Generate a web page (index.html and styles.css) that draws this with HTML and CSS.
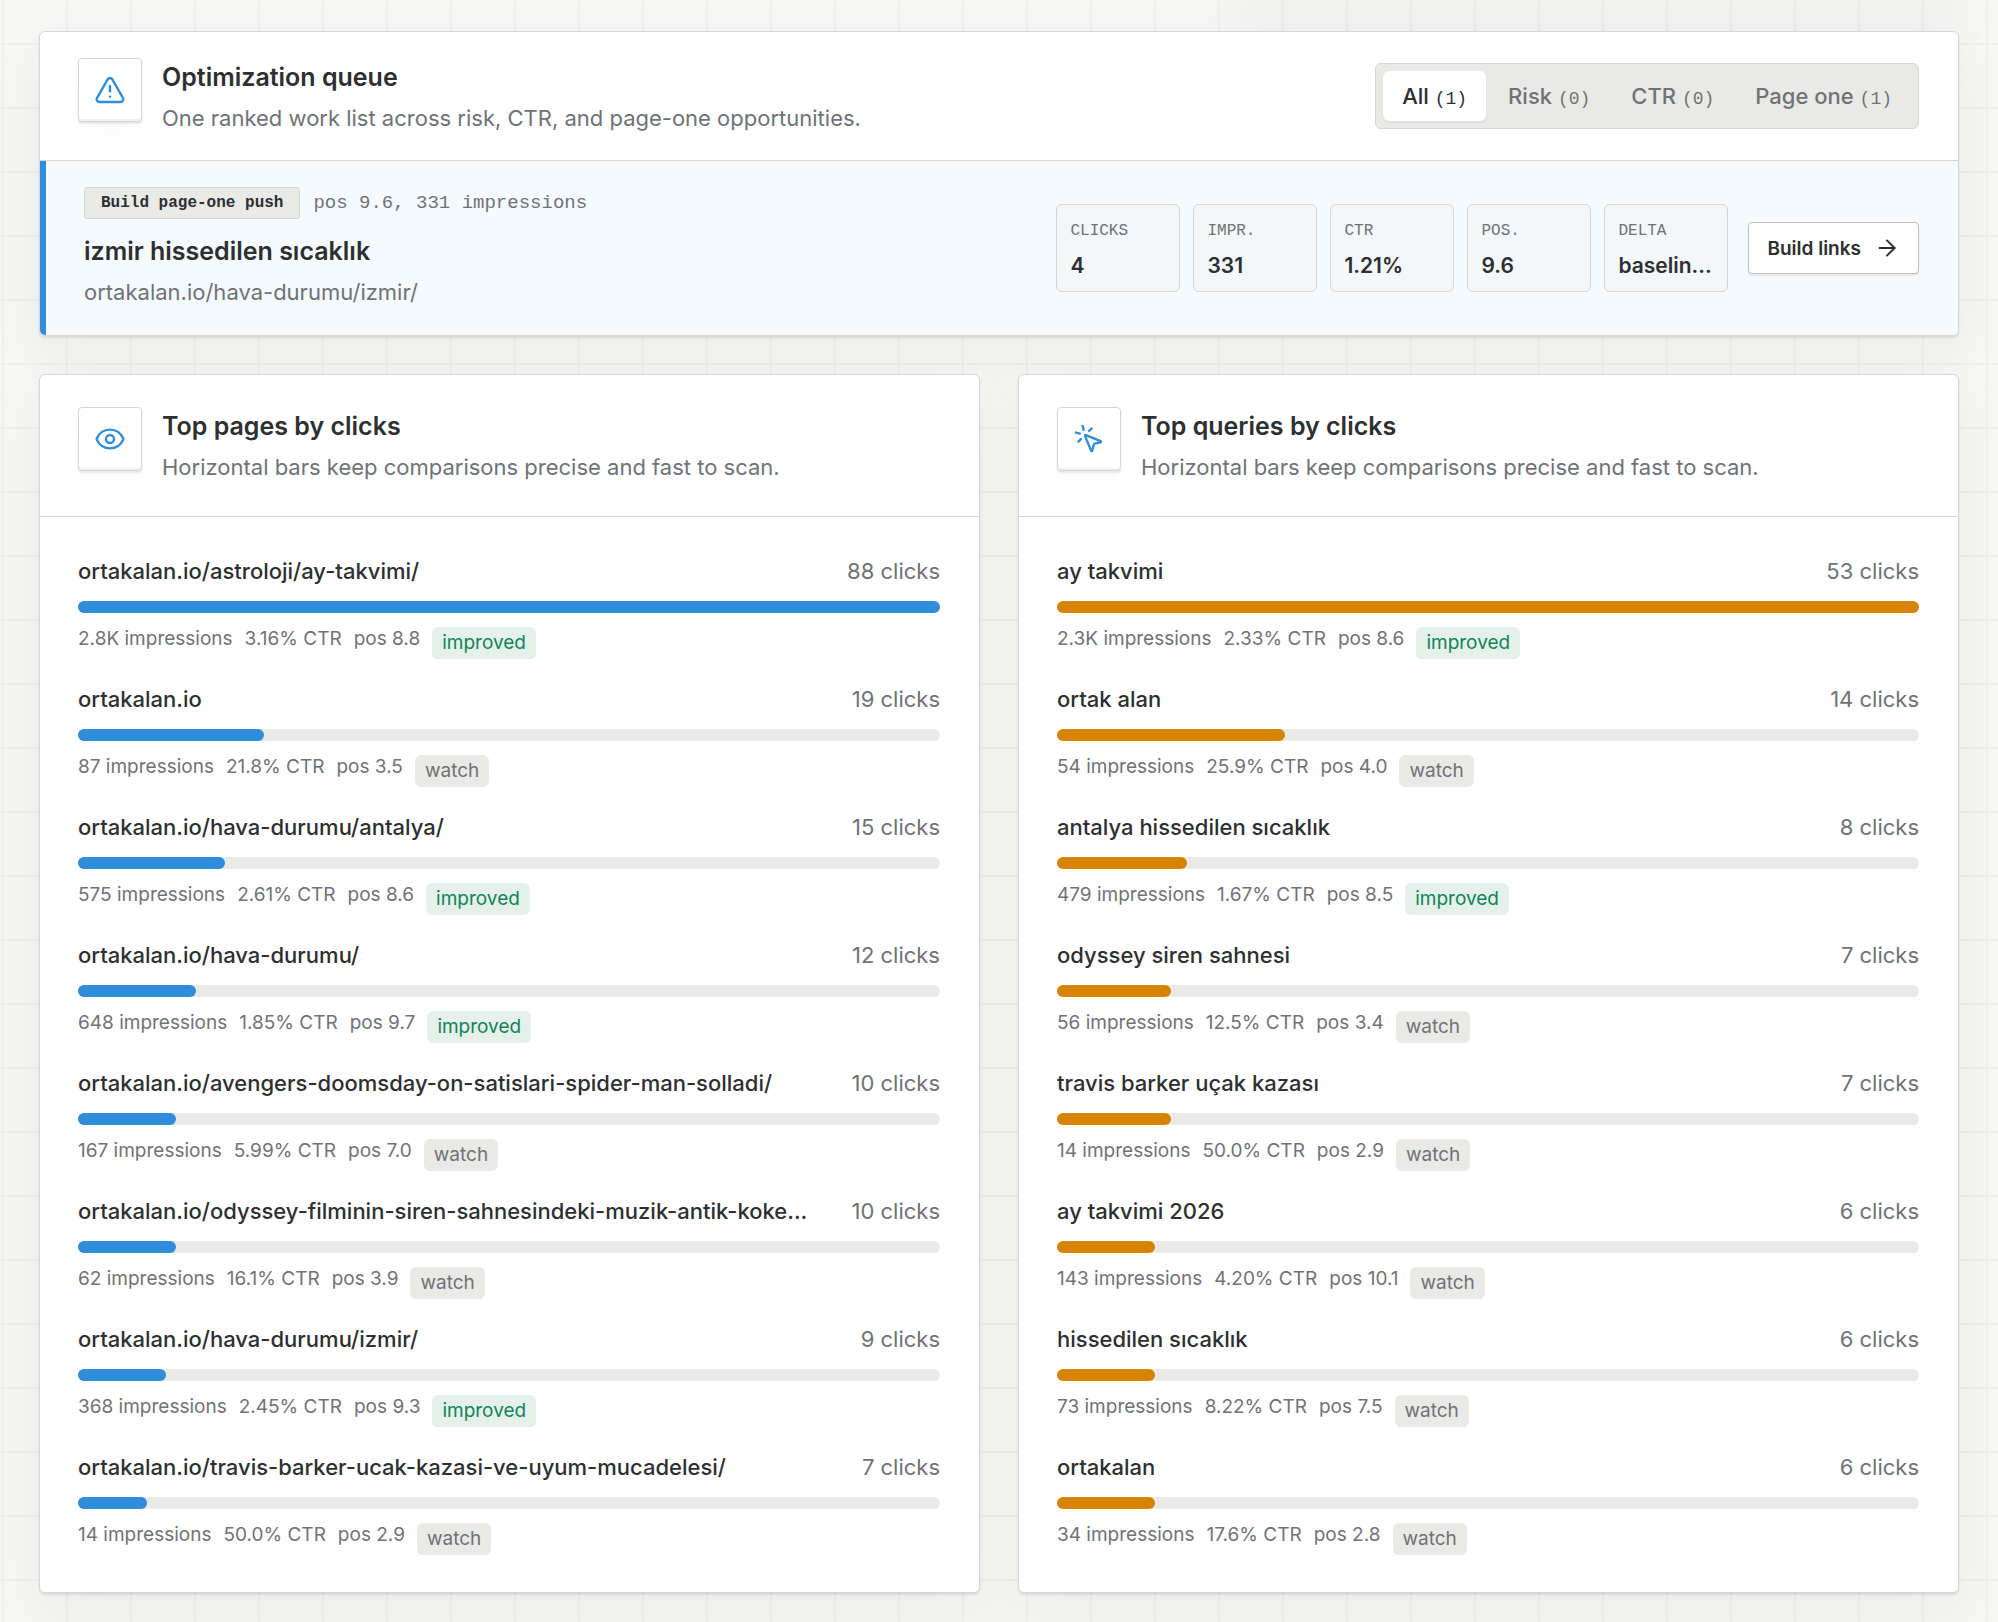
FILE: index.html
```html
<!DOCTYPE html>
<html lang="en">

<head>
    <meta charset="UTF-8" />
    <meta name="viewport" content="width=device-width, initial-scale=1.0" />
    <title>Search performance</title>
    <link rel="stylesheet" href="styles.css">
</head>

<body>

    <div class="previous-panel"></div>

    <main>
        <section class="panel queue">
            <header class="panel-header compact">
                <div class="icon-box">
                    <svg class="icon" viewBox="0 0 24 24">
                        <path d="m21.73 18-8-14a2 2 0 0 0-3.48 0l-8 14A2 2 0 0 0 4 21h16a2 2 0 0 0 1.73-3" />
                        <path d="M12 9v4" />
                        <path d="M12 17h.01" />
                    </svg>
                </div>
                <div class="heading">
                    <h2>Optimization queue</h2>
                    <p>One ranked work list across risk, CTR, and page-one opportunities.</p>
                </div>
                <div class="tabs">
                    <button type="button" class="tab active">All <span>(1)</span></button>
                    <button type="button" class="tab">Risk <span>(0)</span></button>
                    <button type="button" class="tab">CTR <span>(0)</span></button>
                    <button type="button" class="tab">Page one <span>(1)</span></button>
                </div>
            </header>

            <article class="queue-row">
                <div class="queue-info">
                    <div class="queue-tags">
                        <span class="chip">Build page-one push</span>
                        <span class="reason">pos 9.6, 331 impressions</span>
                    </div>
                    <h3>izmir hissedilen sıcaklık</h3>
                    <p>ortakalan.io/hava-durumu/izmir/</p>
                </div>
                <dl class="metrics">
                    <div><dt>CLICKS</dt><dd>4</dd></div>
                    <div><dt>IMPR.</dt><dd>331</dd></div>
                    <div><dt>CTR</dt><dd>1.21%</dd></div>
                    <div><dt>POS.</dt><dd>9.6</dd></div>
                    <div><dt>DELTA</dt><dd>baselin...</dd></div>
                </dl>
                <button type="button" class="action">
                    Build links
                    <svg class="arrow" viewBox="0 0 24 24">
                        <path d="M5 12h14" />
                        <path d="m12 5 7 7-7 7" />
                    </svg>
                </button>
            </article>
        </section>

        <div class="columns">
            <section class="panel">
                <header class="panel-header">
                    <div class="icon-box">
                        <svg class="icon" viewBox="0 0 24 24">
                            <path d="M2.062 12.348a1 1 0 0 1 0-.696 10.75 10.75 0 0 1 19.876 0 1 1 0 0 1 0 .696 10.75 10.75 0 0 1-19.876 0" />
                            <circle cx="12" cy="12" r="3" />
                        </svg>
                    </div>
                    <div class="heading">
                        <h2>Top pages by clicks</h2>
                        <p>Horizontal bars keep comparisons precise and fast to scan.</p>
                    </div>
                </header>
                <ul class="bar-list" id="pages"></ul>
            </section>

            <section class="panel">
                <header class="panel-header">
                    <div class="icon-box">
                        <svg class="icon" viewBox="0 0 24 24">
                            <path d="M14 4.1 12 6" />
                            <path d="m5.1 8-2.9-.8" />
                            <path d="m6 12-1.9 2" />
                            <path d="M7.2 2.2 8 5.1" />
                            <path d="M9.037 9.69a.498.498 0 0 1 .653-.653l11 4.5a.5.5 0 0 1-.074.949l-4.349 1.041a1 1 0 0 0-.74.739l-1.04 4.35a.5.5 0 0 1-.95.074z" />
                        </svg>
                    </div>
                    <div class="heading">
                        <h2>Top queries by clicks</h2>
                        <p>Horizontal bars keep comparisons precise and fast to scan.</p>
                    </div>
                </header>
                <ul class="bar-list orange" id="queries"></ul>
            </section>
        </div>
    </main>

    <script>
        // name, clicks, impressions, ctr, position, status
        const pages = [
            ['ortakalan.io/astroloji/ay-takvimi/', 88, '2.8K', '3.16%', '8.8', 'improved'],
            ['ortakalan.io', 19, '87', '21.8%', '3.5', 'watch'],
            ['ortakalan.io/hava-durumu/antalya/', 15, '575', '2.61%', '8.6', 'improved'],
            ['ortakalan.io/hava-durumu/', 12, '648', '1.85%', '9.7', 'improved'],
            ['ortakalan.io/avengers-doomsday-on-satislari-spider-man-solladi/', 10, '167', '5.99%', '7.0', 'watch'],
            ['ortakalan.io/odyssey-filminin-siren-sahnesindeki-muzik-antik-koke...', 10, '62', '16.1%', '3.9', 'watch'],
            ['ortakalan.io/hava-durumu/izmir/', 9, '368', '2.45%', '9.3', 'improved'],
            ['ortakalan.io/travis-barker-ucak-kazasi-ve-uyum-mucadelesi/', 7, '14', '50.0%', '2.9', 'watch']
        ];

        const queries = [
            ['ay takvimi', 53, '2.3K', '2.33%', '8.6', 'improved'],
            ['ortak alan', 14, '54', '25.9%', '4.0', 'watch'],
            ['antalya hissedilen sıcaklık', 8, '479', '1.67%', '8.5', 'improved'],
            ['odyssey siren sahnesi', 7, '56', '12.5%', '3.4', 'watch'],
            ['travis barker uçak kazası', 7, '14', '50.0%', '2.9', 'watch'],
            ['ay takvimi 2026', 6, '143', '4.20%', '10.1', 'watch'],
            ['hissedilen sıcaklık', 6, '73', '8.22%', '7.5', 'watch'],
            ['ortakalan', 6, '34', '17.6%', '2.8', 'watch']
        ];

        function renderBars(id, rows) {
            const max = rows[0][1];
            document.getElementById(id).innerHTML = rows.map(([name, clicks, impressions, ctr, pos, status]) => `
                <li>
                    <div class="bar-head">
                        <span class="name">${name}</span>
                        <span class="clicks">${clicks} clicks</span>
                    </div>
                    <div class="track"><div class="fill" style="width: ${clicks / max * 100}%"></div></div>
                    <div class="meta">
                        <span>${impressions} impressions</span>
                        <span>${ctr} CTR</span>
                        <span>pos ${pos}</span>
                        <span class="badge ${status}">${status}</span>
                    </div>
                </li>`).join('');
        }

        renderBars('pages', pages);
        renderBars('queries', queries);
    </script>

</body>

</html>
```
FILE: styles.css
```css
* {
    box-sizing: border-box;
    margin: 0;
    padding: 0;
}

body {
    font-family: Inter, "Liberation Sans", sans-serif;
    font-size: 22px;
    color: #2d2f31;
    background-color: #f6f6f4;
    background-image:
        linear-gradient(to right, #efefed 2px, transparent 2px),
        linear-gradient(to bottom, #efefed 2px, transparent 2px);
    background-size: 64px 64px;
    background-position: 2px 43px;
    overflow-x: hidden;
}

/* tail of the section above, only its shadow shows */
.previous-panel {
    width: 36%;
    height: 40px;
    margin: -40px 40px 31px auto;
    box-shadow: 0 24px 60px rgba(30, 30, 20, 0.05);
}

main {
    display: flex;
    flex-direction: column;
    gap: 38px;
    padding: 0 39px 29px;
}

.panel {
    min-width: 0;
    background-color: white;
    border: 1px solid #d5d6d5;
    border-radius: 6px;
    box-shadow: 0 2px 2px rgba(30, 30, 20, 0.1), 0 20px 60px rgba(30, 30, 20, 0.05);
}

.panel-header {
    display: flex;
    gap: 20px;
    padding: 32px 39px 32px 38px;
    border-bottom: 1px solid #d5d6d5;
}

.panel-header.compact {
    padding-top: 26px;
    padding-bottom: 25px;
}

.icon-box {
    display: flex;
    align-items: center;
    justify-content: center;
    flex-shrink: 0;
    width: 64px;
    height: 64px;
    border: 1px solid #d5d6d5;
    border-radius: 4px;
    background-color: white;
    box-shadow: inset 0 -2px 0 #f0f0ef, 0 2px 2px rgba(30, 30, 20, 0.1), 0 16px 40px rgba(30, 30, 20, 0.02);
}

.icon,
.arrow {
    width: 32px;
    height: 32px;
    fill: none;
    stroke: #308ddc;
    stroke-width: 1.8;
    stroke-linecap: round;
    stroke-linejoin: round;
}

.heading {
    flex: 1;
    min-width: 0;
}

h2 {
    margin-bottom: 5px;
    font-size: 25px;
    font-weight: 600;
    line-height: 38px;
}

.heading p {
    color: #6f7277;
    line-height: 34px;
}

.tabs {
    display: flex;
    align-self: center;
    gap: 3px;
    height: 66px;
    margin-bottom: 2px;
    padding: 7px;
    border: 1px solid #d5d6d5;
    border-radius: 6px;
    background-color: #e9eae6;
}

.tab {
    padding: 0 19px;
    border: none;
    border-radius: 6px;
    background: none;
    font-family: inherit;
    font-size: 22px;
    font-weight: 500;
    color: #6f7277;
    cursor: pointer;
}

.tab span {
    font-family: "Liberation Mono", monospace;
    font-size: 18px;
}

.tab.active {
    background-color: white;
    color: #2d2f31;
    box-shadow: 0 2px 3px rgba(30, 30, 20, 0.06);
}

.queue-row {
    display: flex;
    align-items: center;
    gap: 20px;
    padding: 26px 39px 26px 38px;
    border-left: 6px solid #308ddc;
    border-radius: 0 0 5px 5px;
    background-color: #f5faff;
}

.queue-info {
    flex: 1;
    min-width: 0;
}

.queue-tags {
    display: flex;
    align-items: center;
    gap: 13px;
    font-family: "Liberation Mono", monospace;
}

.chip {
    height: 32px;
    padding: 0 16px;
    border: 1px solid #d5d6d5;
    border-radius: 3px;
    background-color: #e9eae6;
    font-size: 16px;
    font-weight: bold;
    line-height: 30px;
}

.reason {
    font-size: 19px;
    color: #6f7277;
}

h3 {
    margin: 15px 0 7px;
    font-size: 25px;
    font-weight: 600;
    line-height: 34px;
}

.queue-info p {
    color: #6f7277;
    line-height: 34px;
}

.metrics {
    display: flex;
    gap: 13px;
}

.metrics div {
    width: 124px;
    height: 88px;
    padding: 12px 13px;
    border: 1px solid #d5d6d5;
    border-radius: 6px;
    background-color: #f3f7fa;
}

dt {
    margin-bottom: 6px;
    font-family: "Liberation Mono", monospace;
    font-size: 16px;
    line-height: 28px;
    color: #6f7277;
}

dd {
    font-size: 21px;
    font-weight: 600;
    line-height: 30px;
    white-space: nowrap;
}

.action {
    display: flex;
    align-items: center;
    gap: 13px;
    height: 52px;
    padding: 0 18px;
    border: 1px solid #bfc0c0;
    border-radius: 4px;
    background-color: white;
    box-shadow: 0 2px 2px rgba(30, 30, 20, 0.08);
    font-family: inherit;
    font-size: 19px;
    font-weight: 600;
    color: #2d2f31;
    cursor: pointer;
}

.arrow {
    width: 26px;
    height: 26px;
    stroke: #2d2f31;
}

.columns {
    display: grid;
    grid-template-columns: 1fr 1fr;
    gap: 38px;
}

.bar-list {
    display: flex;
    flex-direction: column;
    gap: 24px;
    padding: 38px 39px 37px 38px;
    list-style: none;
}

.bar-list li {
    display: flex;
    flex-direction: column;
    gap: 14px;
}

.bar-head {
    display: flex;
    justify-content: space-between;
    gap: 26px;
    line-height: 32px;
    white-space: nowrap;
}

.name {
    overflow: hidden;
    text-overflow: ellipsis;
    font-weight: 500;
}

.clicks {
    color: #6f7277;
}

.track {
    height: 12px;
    border-radius: 6px;
    background-color: #e9eae6;
}

.fill {
    height: 100%;
    border-radius: 6px;
    background-color: #308ddc;
}

.orange .fill {
    background-color: #d68400;
}

.meta {
    display: flex;
    align-items: flex-start;
    gap: 12px;
    font-size: 19px;
    line-height: 24px;
    color: #6f7277;
}

.badge {
    padding: 0 10px;
    border-radius: 6px;
    background-color: #e9eae6;
    line-height: 32px;
}

.badge.improved {
    background-color: #e5f0eb;
    color: #118459;
}
```
